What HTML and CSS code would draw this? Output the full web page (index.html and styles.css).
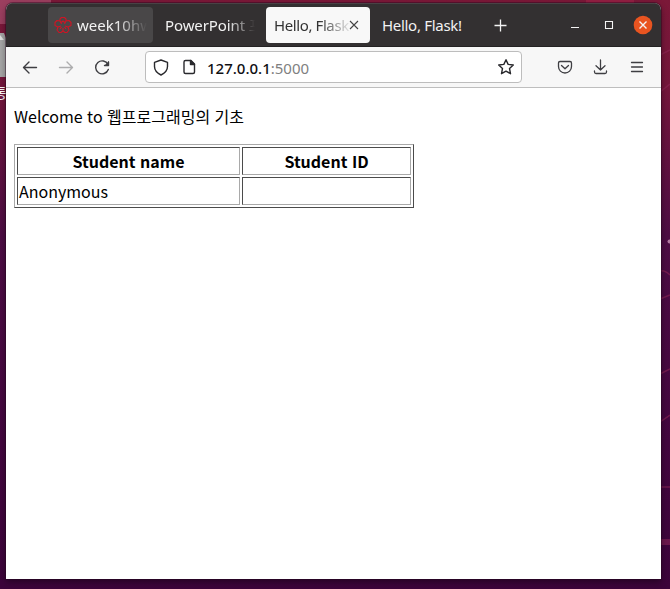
FILE: index.html
```html
<!DOCTYPE html>
<html lang="ko">
<head>
<meta charset="utf-8">
<title>Hello, Flask!</title>
<link rel="stylesheet" href="styles.css">
</head>
<body>
<svg class="wallpaper" width="670" height="589" viewBox="0 0 670 589" fill="none">
  <path d="M0 0H51V24H0z" fill="#a74c6c" opacity=".75"/>
  <path d="M586 0H634V4H586z" fill="#a12449" opacity=".6"/>
  <path d="M660 55l10-5M660 92l10-8M660 271q5-1 10 4M660 299l10-4M660 374l10-5M660 422l10-7M660 487h10" stroke="#902657" stroke-width="1.500" opacity=".6"/>
  <path d="M660 542h10" stroke="#8b2458" stroke-width="6" opacity=".6"/>
  <circle cx="669.500" cy="241.500" r="2" fill="#b17aa0"/>
  <path d="M0 33h4l2 5v39H0z" fill="#a6a6a6"/><path d="M0 35l4 5H0z" fill="#e0e0e0"/>
</svg>
<span class="desktop-label">통</span>
<main class="window">
  <header class="titlebar">
    <div class="tab tab-hover">
      <svg class="favicon" width="18" height="18" viewBox="0 0 18 18" fill="none" stroke="#d01424" stroke-width="1.100" stroke-linejoin="round">
        <path d="M6 5V3l1.500-1.500h3L12 3v2l3-.5 2 2v3L14 11l1 3-2 2.500h-2L9 15l-2 1.500H5L3 14l1-3-3-1.500v-3l2-2z"/>
        <path d="M6 5l1.500 3M12 5l-1.500 3M4 11l3-1M14 11l-3-1M9 15v-3M6.500 7l2.500-2 2.500 2M6 13l1.500-2M12 13l-1.500-2"/>
      </svg>
      <span class="title title-week">week10hw</span>
    </div>
    <div class="tab tab-ppt"><span class="title title-ppt">PowerPoint 프</span></div>
    <div class="tab tab-active">
      <span class="title title-active">Hello, Flask!</span>
      <svg class="tab-close" width="10" height="10" viewBox="0 0 10 10" stroke="#444" stroke-width="1.1"><path d="M1 1l8 8M9 1L1 9"/></svg>
    </div>
    <div class="tab tab-last"><span class="title">Hello, Flask!</span></div>
    <svg class="controls" width="176" height="44" viewBox="485 3 176 44" fill="none" stroke="#f4f4f4" stroke-width="1.3">
      <path d="M494.500 25.500h12M500.500 19.500v12"/>
      <path d="M571 27.500h8" stroke-width="1.200"/>
      <path d="M605.500 21.500h7v7h-7z" stroke-width="1.100"/>
      <circle cx="643" cy="25" r="9.300" fill="#e95420" stroke="none"/>
      <path d="M639.500 21.500l7 7M646.500 21.500l-7 7" stroke-width="1.400"/>
    </svg>
  </header>
  <nav class="toolbar">
    <svg class="nav-icons" width="139" height="40" viewBox="6 47 139 40" fill="none" stroke="#3e3e42" stroke-width="1.400" stroke-linecap="round" stroke-linejoin="round">
      <path d="M36.500 67.500H23.500M29 62l-5.500 5.500 5.500 5.500"/>
      <path d="M59.500 67.500h13M67 62l5.500 5.500L67 73" stroke="#adadae"/>
      <path d="M108 64.500a6.500 6.500 0 1 0 .3 5M108.500 62v3.500h-4"/><path d="M109 61v5h-5z" fill="#3e3e42" stroke="none"/>
    </svg>
    <div class="address">
      <svg class="shield" width="62" height="30" viewBox="146 52 62 30" fill="none" stroke="#29292d" stroke-width="1.400" stroke-linejoin="round">
        <path d="M161 60l6.500 2.400v4.200c0 3-2.500 6.500-6.500 8.400-4-1.900-6.500-5.400-6.500-8.400v-4.200z"/>
        <path d="M185.500 60.500h5.500l3.500 3.500v8q0 1.500-1.500 1.500h-7.500q-1.500 0-1.500-1.500v-10q0-1.500 1.500-1.500z"/><path d="M190.500 60.500v4h4z" fill="#29292d"/>
      </svg>
      <span class="url">127.0.0.1<span class="port">:5000</span></span>
      <svg class="star" width="18" height="18" viewBox="0 0 18 18" fill="none" stroke="#29292d" stroke-width="1.400" stroke-linejoin="round"><path d="M9 1.700l2.150 4.650 5.150.65-3.800 3.500 1 5.200L9 13.200l-4.500 2.500 1-5.200L1.700 7l5.150-.65z"/></svg>
    </div>
    <svg class="tools" width="139" height="40" viewBox="522 47 139 40" fill="none" stroke="#3e3e42" stroke-width="1.300" stroke-linecap="round" stroke-linejoin="round">
      <path d="M560 61.500h10q1.500 0 1.500 1.500v3.500a6.500 6.500 0 0 1-13 0V63q0-1.500 1.500-1.500zM561.500 65.500l3.500 3.300 3.500-3.300"/>
      <path d="M600.500 60v10M596 65.800l4.500 4.200 4.500-4.200M594.500 71v1q0 1.500 1.500 1.500h9q1.500 0 1.500-1.500v-1"/>
      <path d="M631.500 62.500h11M631.500 67h11M631.500 71.500h11"/>
    </svg>
  </nav>
  <article class="page">
    <p>Welcome to 웹프로그래밍의 기초</p>
    <table>
      <tr><th class="name-col">Student name</th><th>Student ID</th></tr>
      <tr><td>Anonymous</td><td></td></tr>
    </table>
  </article>
</main>
</body>
</html>
```
FILE: styles.css
```css
* { box-sizing: border-box; }
body {
  margin: 0;
  height: 589px;
  padding: 3px 9px 10px 6px;
  overflow: hidden;
  background: linear-gradient(#7b1838, #74163c 15%, #4d0d44 40%, #43063f 75%, #3c043a);
}
svg { display: block; flex: none; }
.wallpaper { position: absolute; left: 0; top: 0; }
.desktop-label { position: absolute; left: -6px; top: 82px; font: 14px/20px "Noto Sans CJK KR", sans-serif; color: #fff; }
.window {
  position: relative;
  height: 576px;
  overflow: hidden;
  border-radius: 7px 7px 0 0;
  background: #fff;
  box-shadow: 0 0 0 1px #26051f66, 0 3px 7px #0006;
}
.titlebar {
  display: flex;
  height: 44px;
  padding: 4px 0 0 42px;
  background: #333031;
  box-shadow: inset 0 1px #484345, inset 0 -1px #242223;
  font: 15px/36px "Noto Sans", "Noto Sans CJK KR", sans-serif;
  letter-spacing: -.3px;
  color: #f2f2f2;
}
.tab { display: flex; height: 36px; border-radius: 4px; overflow: hidden; white-space: nowrap; flex: none; }
.tab-hover { width: 105px; background: #494748; padding-left: 6px; }
.favicon { margin: 9px 5px 0 0; }
.title { overflow: hidden; }
.title-week { width: 70px; letter-spacing: 0; -webkit-mask-image: linear-gradient(90deg, #000 56%, transparent 100%); mask-image: linear-gradient(90deg, #000 56%, transparent 100%); }
.tab-ppt { width: 113px; padding-left: 12px; }
.title-ppt { width: 90px; letter-spacing: -.1px; -webkit-mask-image: linear-gradient(90deg, #000 70%, transparent 100%); mask-image: linear-gradient(90deg, #000 70%, transparent 100%); }
.tab-active { width: 104px; padding-left: 8px; background: #f8f8f8; color: #333; }
.title-active { width: 75px; letter-spacing: -.4px; -webkit-mask-image: linear-gradient(90deg, #000 60%, transparent 105%); mask-image: linear-gradient(90deg, #000 60%, transparent 105%); }
.tab-close { margin: 13px 0 0; }
.tab-last { width: 115px; padding-left: 12px; }
.controls { margin-top: -4px; }
.toolbar { display: flex; height: 41px; background: #f7f7f7; border-bottom: 1px solid #bebebe; }
.address { display: flex; width: 377px; height: 32px; margin-top: 4px; border: 1px solid #bdbdbd; border-radius: 4px; background: #fff; }
.url { flex: 1; margin-left: -1px; font: 500 15px/32px "Noto Sans", sans-serif; color: #101014; }
.port { color: #808080; font-weight: 400; }
.star { margin: 6px 6px 0 0; }
.page { padding: 0 8px; font: 16px/24px "Noto Sans CJK KR", sans-serif; color: #000; }
.page p { margin: 16px 0; }
table { width: 400px; height: 64px; border: 1px solid; border-color: #a9a9a9 #4b4b4b #4b4b4b #a9a9a9; border-spacing: 2px; table-layout: fixed; }
td, th { height: 28px; padding: 1px; border: 1px solid; border-color: #4b4b4b #a9a9a9 #a9a9a9 #4b4b4b; }
.name-col { width: 223px; }
```
